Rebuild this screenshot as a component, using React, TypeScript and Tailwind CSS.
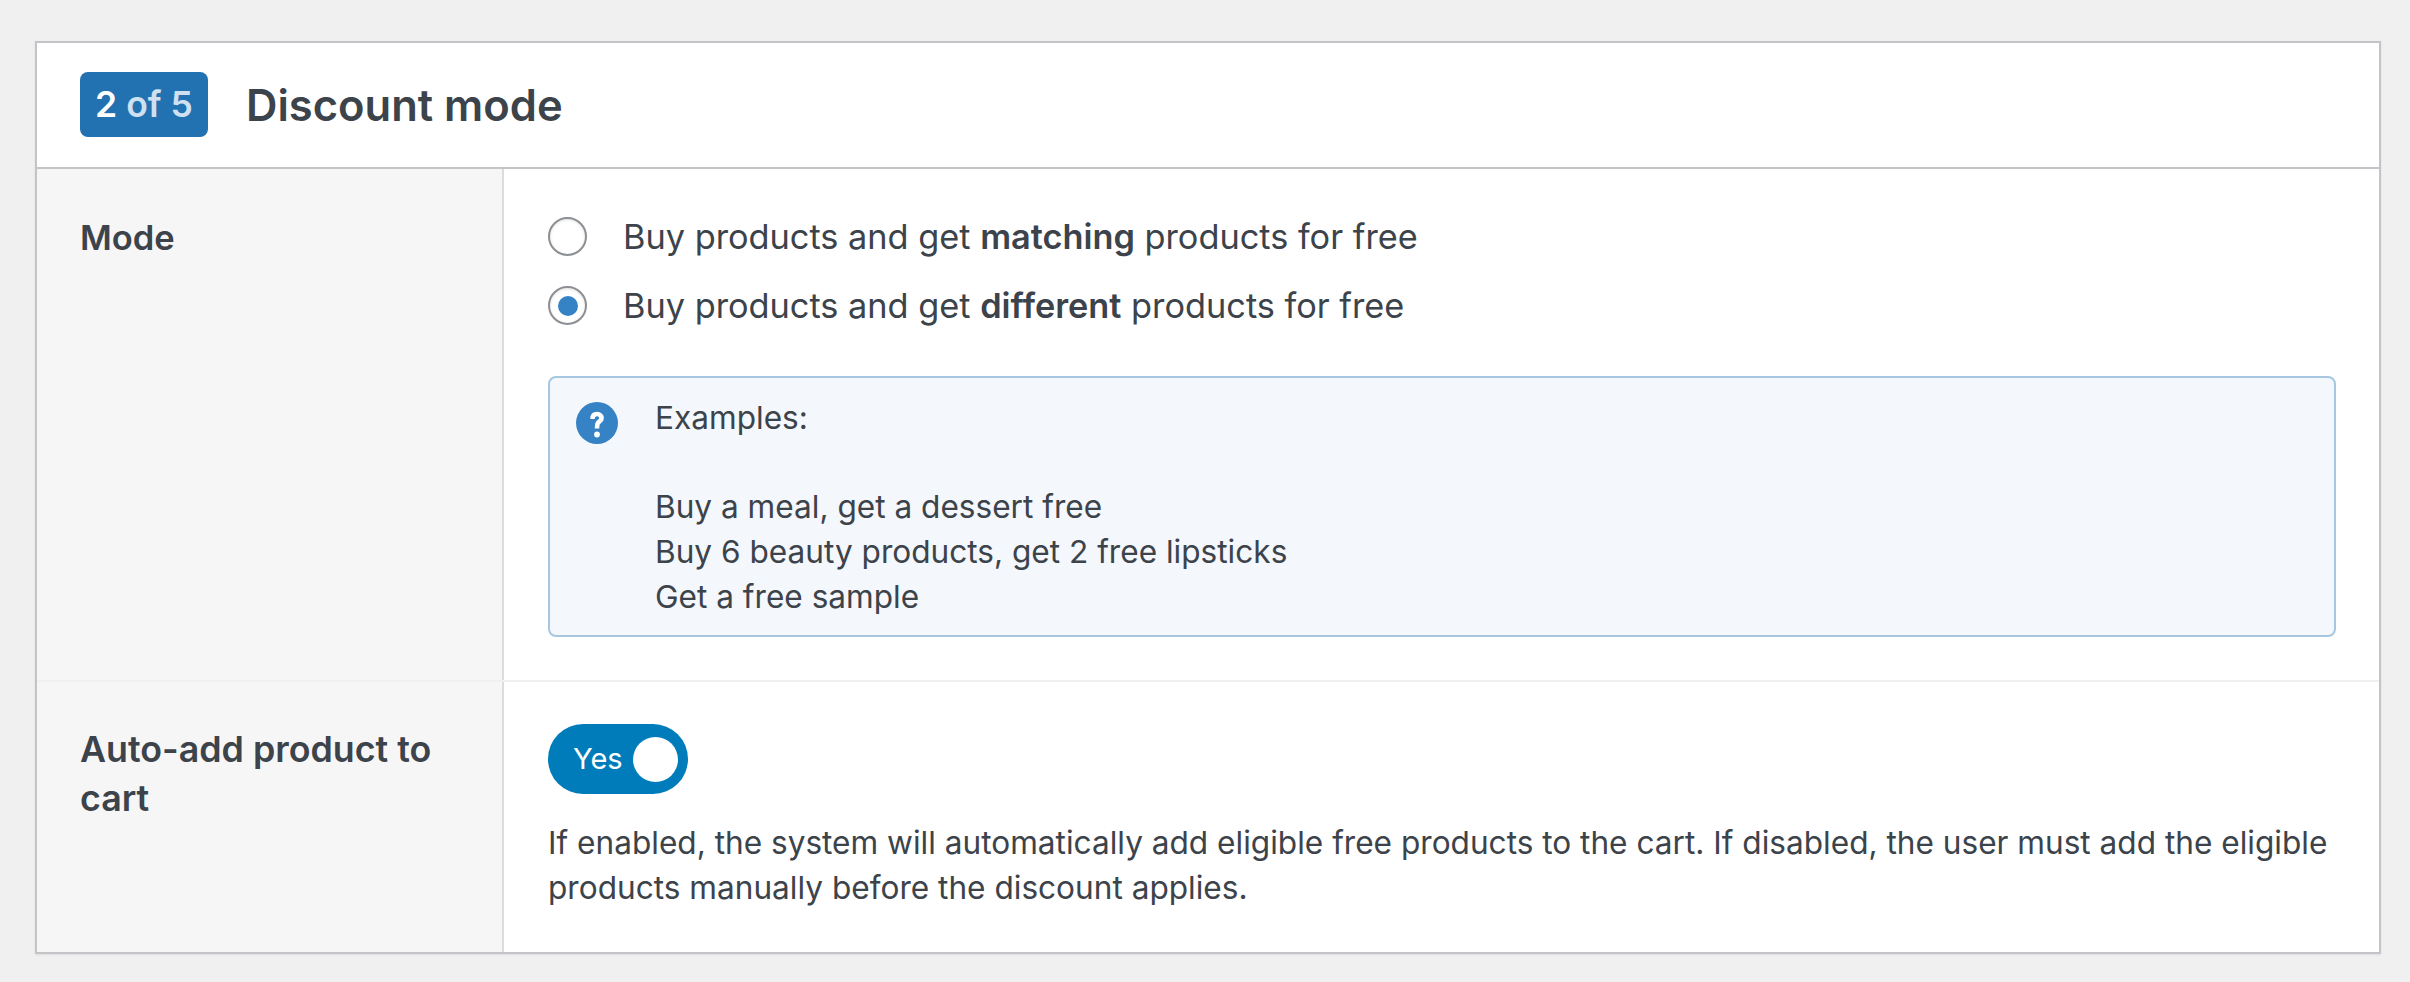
function Radio({ checked }: { checked?: boolean }) {
  return (
    <span className="flex h-[39px] w-[39px] shrink-0 items-center justify-center rounded-full border-2 border-[#8c8f94] bg-white shadow-[inset_0_1px_3px_rgba(0,0,0,0.12)]">
      {checked && <span className="h-[20px] w-[20px] rounded-full bg-[#3582c4]" />}
    </span>
  );
}

function HelpIcon() {
  return (
    <svg viewBox="0 0 42 42" className="mt-[7px] h-[42px] w-[42px] shrink-0">
      <circle cx="21" cy="21" r="21" fill="#3582c4" />
      <path d="M16.5 17C16.500 13.500 18.500 12 21 12C23.800 12 25.500 13.600 25.500 16C25.500 18 24.300 19 22.800 20C21.500 20.900 21 21.800 21 26.500" fill="none" stroke="#fff" strokeWidth="4.600" />
      <circle cx="21" cy="32.500" r="2.900" fill="#fff" />
    </svg>
  );
}

export default function App() {
  return (
    <div className="h-screen w-full overflow-hidden bg-[#f0f0f1] pl-[35px] pr-[29px] pt-[41px] font-['Inter',sans-serif] text-[#3c434a]">
      <div className="border-2 border-[#c3c4c7] bg-white shadow-[0_1px_2px_rgba(0,0,0,0.08)]">
        <div className="flex h-[126px] items-center border-b-2 border-[#c3c4c7] pl-[43px]">
          <span className="-mt-[1px] flex h-[65px] w-[128px] items-center justify-center gap-[9px] rounded-[8px] bg-[#2271b1] text-[35.5px] font-semibold text-[#cfe0f0]">
            <span className="text-white">2</span>
            <span>of 5</span>
          </span>
          <h2 className="ml-[38px] mt-[1px] text-[43.5px] font-semibold">Discount mode</h2>
        </div>

        <div className="flex h-[513px] border-b-2 border-[#f0f0f1]">
          <div className="w-[467px] shrink-0 border-r-2 border-[#dcdcde] bg-[#f6f6f6] pl-[43px] pt-[46px] text-[34.5px] leading-[45px] font-semibold">
            Mode
          </div>
          <div className="min-w-0 flex-1 pl-[44px] pr-[43px] pt-[45px] text-[34.3px] leading-[45px]">
            <label className="flex items-center gap-[36px]">
              <Radio />
              <span>
                Buy products and get <b className="font-semibold">matching</b> products for free
              </span>
            </label>
            <label className="mt-[24px] flex items-center gap-[36px]">
              <Radio checked />
              <span>
                Buy products and get <b className="font-semibold">different</b> products for free
              </span>
            </label>
            <div className="mt-[48px] flex h-[261px] gap-[37px] rounded-[8px] border-2 border-[#a7c6e0] bg-[#f4f7fb] pl-[26px] pt-[17px] text-[31.6px]">
              <HelpIcon />
              <div>
                <p>Examples:</p>
                <p className="mt-[44px]">Buy a meal, get a dessert free</p>
                <p>Buy 6 beauty products, get 2 free lipsticks</p>
                <p>Get a free sample</p>
              </div>
            </div>
          </div>
        </div>

        <div className="flex h-[270px]">
          <div className="w-[467px] shrink-0 border-r-2 border-[#dcdcde] bg-[#f6f6f6] pl-[43px] pr-[30px] pt-[43px] text-[35.8px] leading-[49px] font-semibold">
            Auto-add product to cart
          </div>
          <div className="min-w-0 flex-1 pl-[44px] pr-[30px] pt-[42px]">
            <div className="flex h-[70px] w-[140px] items-center rounded-full bg-[#007cba] pl-[25px] pr-[10px] text-[29px] text-white">
              <span>Yes</span>
              <span className="ml-auto h-[45px] w-[45px] rounded-full bg-white" />
            </div>
            <p className="mt-[26px] text-[31.6px] leading-[45px]">
              If enabled, the system will automatically add eligible free products to the cart. If disabled, the user must add the eligible products manually before the discount applies.
            </p>
          </div>
        </div>
      </div>
    </div>
  );
}
